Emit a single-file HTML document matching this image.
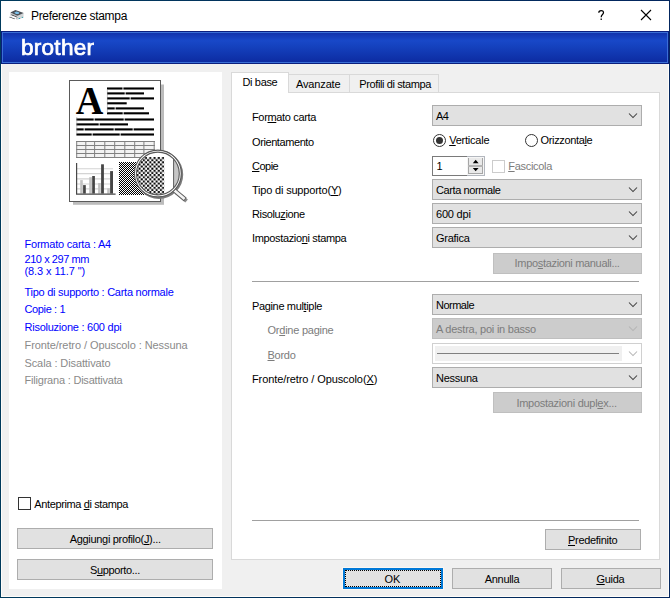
<!DOCTYPE html>
<html lang="it"><head><meta charset="utf-8"><title>Preferenze stampa</title>
<style>
html,body{margin:0;padding:0}
body{width:670px;height:598px;background:#f0f0f0;position:relative;overflow:hidden;font-family:"Liberation Sans",Arial,sans-serif;font-size:11px}
div,svg{position:absolute;box-sizing:border-box}
.t{white-space:nowrap;height:auto}
.t u{text-decoration:underline;text-underline-offset:1px;text-decoration-thickness:1px}
.win{left:0;top:0;width:670px;height:598px;border:1px solid #02305c;border-image:linear-gradient(to right,#003a5c,#03265e) 1}
.win2{left:1px;top:1px;width:668px;height:596px;border:1px solid #fffdfa}
.title{left:1px;top:1px;width:668px;height:30px;background:#fff}
.banner{left:1px;top:31px;width:668px;height:33px;border:1px solid #0a1f7e;background:linear-gradient(#1030a8 0,#1848c8 28%,#1440bc 50%,#0c2aa0 100%)}
.banner i{position:absolute;left:0;top:0;right:0;bottom:0;border:1px solid #3a6fd6}
.logo{left:20.8px;top:35.3px;font-weight:normal;font-size:22px;line-height:26px;color:#fff;letter-spacing:0.25px;white-space:nowrap;-webkit-text-stroke:0.7px #fff;transform:scaleX(1.025);transform-origin:0 0}
.left{left:9px;top:72px;width:213px;height:517px;background:#fff}
.panel{left:231px;top:92px;width:429px;height:468px;background:#fff;border:1px solid #d9d9d9}
.tab{top:74px;height:19px;background:#f0f0f0;border:1px solid #d9d9d9;border-bottom:none}
.tabsel{left:231px;top:72px;width:58px;height:21px;background:#fff;border:1px solid #d9d9d9;border-bottom:none}
.dd{left:432px;width:210px;height:21px;background:#e1e1e1;border:1px solid #adadad}
.dd.dis{background:#cccccc;border-color:#bfbfbf}
.btn{height:21px;background:#e1e1e1;border:1px solid #adadad}
.btn.dis{background:#cccccc;border-color:#bfbfbf}
.sep{left:252px;width:387px;height:1px;background:#a0a0a0}
.radio{width:13px;height:13px;border-radius:50%;border:1px solid #333;background:#fff}
.chk{width:13px;height:13px;border:1px solid #333;background:#fff}
</style></head><body>
<div class="win"></div><div class="win2"></div>
<div class="title"></div>
<!-- title icons -->
<svg style="left:6px;top:6px" width="22" height="18" viewBox="6 6 22 18">
 <polygon points="10.4,12.9 10.6,16.6 17.4,19.8 17.5,15.6" fill="#b9bdc0"/>
 <polygon points="17.5,15.6 23.6,13.1 23.5,17.4 17.4,19.8" fill="#d2d5d7"/>
 <polygon points="10.3,12.6 15.4,10 23.7,13 17.5,15.8" fill="#4a5056"/>
 <polygon points="14.2,12.4 16.6,11.5 19.4,12.6 18.6,14 16,13.9" fill="#7cc0ea"/>
 <polygon points="11.6,14.6 17.3,16.9 17.3,17.7 11.2,15.3" fill="#2e3338"/>
 <polygon points="11.2,15.3 9.2,17.3 14.8,19.3 16.9,17.6" fill="#f4f5f6"/>
 <polygon points="9.2,17.3 14.8,19.3 14.9,18.6 9.8,16.8" fill="#4a4f54"/>
 <polygon points="12.4,16.4 16.2,17.8 15.6,18.4 11.8,17" fill="#ffffff"/>
 <rect x="18.7" y="18" width="1.4" height="0.9" fill="#1f9aa8"/><rect x="21.8" y="16.9" width="1.3" height="0.9" fill="#1f9aa8"/>
</svg>
<svg style="left:596px;top:8px" width="12" height="14" viewBox="0 0 12 14"><path d="M2.8 4.7 C2.8 1.9 7.5 1.9 7.5 4.6 C7.5 6.5 5.2 6.7 5.2 9.2 M5.2 10.5 v1.5" stroke="#000" stroke-width="1.25" fill="none"/></svg>
<svg style="left:640px;top:9px" width="12" height="12" viewBox="0 0 12 12"><path d="M1 1 L11 11 M11 1 L1 11" stroke="#000" stroke-width="1.1" fill="none"/></svg>
<div class="banner"><i></i></div>
<div class="logo">brother</div>
<div class="left"></div>
<svg style="left:60px;top:70px" width="140" height="145" viewBox="60 70 140 145">
<defs>
<filter id="bl" x="-20%" y="-20%" width="140%" height="140%"><feGaussianBlur stdDeviation="1.1"/></filter>
<filter id="bl2" x="-20%" y="-20%" width="140%" height="140%"><feGaussianBlur stdDeviation="1.3"/></filter>
<pattern id="ck1" x="119" y="162" width="2" height="2" patternUnits="userSpaceOnUse"><rect width="2" height="2" fill="#fff"/><rect width="1" height="1" fill="#000"/><rect x="1" y="1" width="1" height="1" fill="#000"/></pattern>
<pattern id="ck2" x="134.3" y="157" width="4.26" height="4.26" patternUnits="userSpaceOnUse"><rect width="4.26" height="4.26" fill="#fff"/><rect x="2.18" y="0.05" width="2.0" height="2.0" fill="#000"/><rect x="0.05" y="2.18" width="2.0" height="2.0" fill="#000"/></pattern>
<clipPath id="lens"><circle cx="157.9" cy="173.5" r="21.4"/></clipPath>
</defs>
<filter id="bl0" x="-20%" y="-20%" width="140%" height="140%"><feGaussianBlur stdDeviation="0.7"/></filter>
<rect x="73" y="84.5" width="91" height="120.3" fill="#bcbcbc" filter="url(#bl0)"/>
<rect x="69.5" y="80.5" width="91" height="121" fill="#fff" stroke="#5a5a5a" stroke-width="1"/>
<text x="75.8" y="113.9" font-family="Liberation Serif, serif" font-weight="bold" font-size="40" textLength="27.6" lengthAdjust="spacingAndGlyphs" fill="#000">A</text>
<rect x="107.0" y="87.45" width="15.5" height="2.1" fill="#000"/>
<rect x="123.4" y="87.45" width="30.6" height="2.1" fill="#000"/>
<rect x="107.0" y="92.35" width="17.7" height="2.1" fill="#000"/>
<rect x="125.6" y="92.35" width="18.4" height="2.1" fill="#000"/>
<rect x="107.0" y="97.35" width="22.7" height="2.1" fill="#000"/>
<rect x="130.6" y="97.35" width="23.4" height="2.1" fill="#000"/>
<rect x="107.0" y="102.25" width="19.7" height="2.1" fill="#000"/>
<rect x="107.0" y="107.35" width="7.7" height="2.1" fill="#000"/>
<rect x="115.6" y="107.35" width="28.4" height="2.1" fill="#000"/>
<rect x="107.0" y="112.25" width="15.7" height="2.1" fill="#000"/>
<rect x="123.6" y="112.25" width="25.4" height="2.1" fill="#000"/>
<rect x="76.4" y="118.45" width="17.3" height="2.1" fill="#000"/>
<rect x="94.6" y="118.45" width="29.1" height="2.1" fill="#000"/>
<rect x="124.6" y="118.45" width="29.4" height="2.1" fill="#000"/>
<rect x="76.4" y="123.35" width="22.3" height="2.1" fill="#000"/>
<rect x="99.6" y="123.35" width="28.4" height="2.1" fill="#000"/>
<rect x="76.4" y="128.35" width="7.3" height="2.1" fill="#000"/>
<rect x="84.6" y="128.35" width="29.1" height="2.1" fill="#000"/>
<rect x="114.6" y="128.35" width="18.1" height="2.1" fill="#000"/>
<rect x="133.6" y="128.35" width="20.4" height="2.1" fill="#000"/>
<rect x="76.4" y="133.45" width="15.3" height="2.1" fill="#000"/>
<rect x="92.6" y="133.45" width="27.1" height="2.1" fill="#000"/>
<rect x="120.6" y="133.45" width="33.4" height="2.1" fill="#000"/>
<path d="M107.4 89v24M76.8 117v17" stroke="#8a8a8a" stroke-width="0.5"/>
<rect x="76.5" y="141.5" width="78" height="16" fill="#f2f2f2"/>
<path d="M76 141.5H155M76 145.5H155M76 149.5H155M76 153.5H155M76 157.5H155M76.70 141V158M85.80 141V158M94.60 141V158M104.80 141V158M114.70 141V158M124.80 141V158M134.70 141V158M143.90 141V158M154.20 141V158" stroke="#808080" stroke-width="1" fill="none"/>
<path d="M77 168.7H113M77 173.6H113M77 178.9H113M77 184H113M77 188.9H113" stroke="#d4d4d4" stroke-width="1.1" fill="none"/>
<rect x="80.2" y="180.1" width="2.6" height="13.5" fill="#c2c2c2"/>
<rect x="83.1" y="185.1" width="2.7" height="8.5" fill="#454545"/>
<rect x="89.2" y="177.2" width="2.7" height="16.4" fill="#c2c2c2"/>
<rect x="92.2" y="176" width="2.7" height="17.6" fill="#454545"/>
<rect x="98.1" y="183" width="2.6" height="10.6" fill="#c2c2c2"/>
<rect x="101.1" y="164.3" width="2.8" height="29.3" fill="#454545"/>
<rect x="107.2" y="188.3" width="2.6" height="5.3" fill="#c2c2c2"/>
<rect x="110.1" y="171.1" width="2.9" height="22.5" fill="#454545"/>
<path d="M76.6 163V194.2H115.6" stroke="#484848" stroke-width="1.2" fill="none"/>
<rect x="119" y="162" width="35" height="33" fill="url(#ck1)"/>
<circle cx="158.9" cy="174.6" r="23.2" fill="none" stroke="#7c7c7c" stroke-width="2.2" filter="url(#bl0)"/>
<path d="M176 192.2L186.6 201" stroke="#8a8a8a" stroke-width="4" filter="url(#bl0)"/>
<path d="M174.2 190.2L185.2 199.5" stroke="#5c5c5c" stroke-width="4.4" stroke-linecap="butt"/>
<path d="M174.2 190.2L184.6 199" stroke="#f4f4f4" stroke-width="2.6" stroke-linecap="butt"/>
<circle cx="157.9" cy="173.5" r="23.4" fill="#fff" stroke="#585858" stroke-width="1.1"/>
<g clip-path="url(#lens)">
<rect x="134" y="150" width="48" height="48" fill="#fff"/>
<rect x="134.3" y="157" width="29.85" height="41" fill="url(#ck2)"/>
<rect x="174" y="150" width="8" height="48" fill="#c6c6c6"/>
<rect x="173" y="150" width="1.1" height="48" fill="#6a6a6a"/>
</g>
<circle cx="157.9" cy="173.5" r="21.4" fill="none" stroke="#585858" stroke-width="1.1"/>
</svg>
<!-- tabs -->
<div class="tab" style="left:288px;width:62px"></div>
<div class="tab" style="left:349px;width:90px"></div>
<div class="panel"></div>
<div class="tabsel"></div>
<!-- dropdowns -->
<div class="dd" style="top:105px"></div>
<div class="dd" style="top:179px"></div>
<div class="dd" style="top:203px"></div>
<div class="dd" style="top:227px"></div>
<div class="dd" style="top:294px"></div>
<div class="dd dis" style="top:318px"></div>
<div class="dd" style="top:343px;background:#fff;border-color:#d0d0d0"></div>
<div style="left:435px;top:346px;width:187px;height:15px;background:#f0f0f0"></div>
<div style="left:437px;top:353px;width:182px;height:1px;background:#808080"></div>
<div class="dd" style="top:367px"></div>
<svg style="left:0;top:0" width="670" height="598" viewBox="0 0 670 598" fill="none" stroke-width="1.05">
 <g stroke="#3c3c3c">
 <path d="M629 113.5l4 4 4-4"/><path d="M629 187.5l4 4 4-4"/><path d="M629 211.5l4 4 4-4"/><path d="M629 235.5l4 4 4-4"/><path d="M629 302.5l4 4 4-4"/><path d="M629 375.5l4 4 4-4"/>
 </g>
 <g stroke="#b4b4b4"><path d="M629 326.5l4 4 4-4"/><path d="M629 351.5l4 4 4-4"/></g>
</svg>
<!-- radios -->
<div class="radio" style="left:433px;top:134px"></div>
<div style="left:436px;top:137px;width:7px;height:7px;border-radius:50%;background:#333"></div>
<div class="radio" style="left:525px;top:134px"></div>
<!-- spinner -->
<div style="left:432px;top:156px;width:53px;height:20px;background:#fff;border:1px solid #7a7a7a"></div>
<div style="left:467px;top:156px;width:18px;height:20px;background:#f6f6f6;border:1px solid #b3b7be;border-left:none"></div>
<div style="left:468px;top:158px;width:15px;height:16px;background:#e9e9e9;border:1px solid #a6a6a6;border-top:none"></div>
<div style="left:468px;top:165px;width:15px;height:2px;background:#b4b4b4"></div>
<svg style="left:468px;top:157px" width="16" height="18" viewBox="0 0 16 18"><path d="M7.7 2.8 L10.6 6.2 H4.8Z M7.7 14.2 L10.6 10.9 H4.8Z" fill="#000"/></svg>
<div class="chk" style="left:492px;top:160px;border-color:#cccccc"></div>
<!-- buttons -->
<div class="btn dis" style="left:493px;top:253px;width:148.5px"></div>
<div class="btn dis" style="left:493px;top:392px;width:148.5px"></div>
<div class="sep" style="top:281px"></div>
<div class="sep" style="top:520px"></div>
<div class="btn" style="left:545px;top:529px;width:96px"></div>
<div style="left:342px;top:567px;width:102px;height:23px;border:1px solid #fbf7f2"></div><div class="btn" style="left:343px;top:568px;width:100px;border:2px solid #0078d7"></div>
<div style="left:345px;top:570px;width:96px;height:17px;border:1px dotted #000"></div>
<div class="btn" style="left:452px;top:568px;width:100px"></div>
<div class="btn" style="left:561px;top:568px;width:100px"></div>
<div class="chk" style="left:18px;top:497px"></div>
<div class="btn" style="left:17px;top:528px;width:196px"></div>
<div class="btn" style="left:17px;top:559px;width:196px"></div>
<div class="t" id="t0" style="left:31.0px;top:8.84px;font-size:12px;line-height:14px;color:#000;letter-spacing:-0.317px">Preferenze stampa</div>
<div class="t" id="t1" style="left:242.4px;top:75.69px;font-size:11px;line-height:13px;color:#000;letter-spacing:-0.328px">Di base</div>
<div class="t" id="t2" style="left:296.0px;top:77.69px;font-size:11px;line-height:13px;color:#000;letter-spacing:-0.146px">Avanzate</div>
<div class="t" id="t3" style="left:359.3px;top:77.69px;font-size:11px;line-height:13px;color:#000;letter-spacing:-0.386px">Profili di stampa</div>
<div class="t" id="t4" style="left:252.0px;top:110.69px;font-size:11px;line-height:13px;color:#000;letter-spacing:-0.345px">For<u>m</u>ato carta</div>
<div class="t" id="t5" style="left:252.0px;top:135.69px;font-size:11px;line-height:13px;color:#000;letter-spacing:-0.413px">Orientamento</div>
<div class="t" id="t6" style="left:252.0px;top:159.69px;font-size:11px;line-height:13px;color:#000;letter-spacing:-0.510px"><u>C</u>opie</div>
<div class="t" id="t7" style="left:252.0px;top:183.69px;font-size:11px;line-height:13px;color:#000;letter-spacing:-0.192px">Tipo di supporto(<u>Y</u>)</div>
<div class="t" id="t8" style="left:252.0px;top:207.69px;font-size:11px;line-height:13px;color:#000;letter-spacing:-0.370px">Risolu<u>z</u>ione</div>
<div class="t" id="t9" style="left:252.0px;top:231.69px;font-size:11px;line-height:13px;color:#000;letter-spacing:-0.348px">Impostazio<u>n</u>i stampa</div>
<div class="t" id="t10" style="left:252.0px;top:299.69px;font-size:11px;line-height:13px;color:#000;letter-spacing:-0.349px">Pagine mul<u>t</u>iple</div>
<div class="t" id="t11" style="left:267.5px;top:323.69px;font-size:11px;line-height:13px;color:#7c7c7c;letter-spacing:-0.242px">Or<u>d</u>ine pagine</div>
<div class="t" id="t12" style="left:267.5px;top:348.69px;font-size:11px;line-height:13px;color:#7c7c7c;letter-spacing:-0.275px"><u>B</u>ordo</div>
<div class="t" id="t13" style="left:252.0px;top:372.69px;font-size:11px;line-height:13px;color:#000;letter-spacing:-0.096px">Fronte/retro / Opuscolo(<u>X</u>)</div>
<div class="t" id="t14" style="left:436.0px;top:109.69px;font-size:11px;line-height:13px;color:#000;letter-spacing:-0.600px">A4</div>
<div class="t" id="t15" style="left:436.0px;top:183.69px;font-size:11px;line-height:13px;color:#000;letter-spacing:-0.400px">Carta normale</div>
<div class="t" id="t16" style="left:436.0px;top:207.69px;font-size:11px;line-height:13px;color:#000;letter-spacing:-0.199px">600 dpi</div>
<div class="t" id="t17" style="left:436.0px;top:231.69px;font-size:11px;line-height:13px;color:#000;letter-spacing:-0.267px">Grafica</div>
<div class="t" id="t18" style="left:436.0px;top:298.69px;font-size:11px;line-height:13px;color:#000;letter-spacing:-0.511px">Normale</div>
<div class="t" id="t19" style="left:436.0px;top:322.69px;font-size:11px;line-height:13px;color:#7c7c7c;letter-spacing:-0.236px">A destra, poi in basso</div>
<div class="t" id="t20" style="left:436.0px;top:371.69px;font-size:11px;line-height:13px;color:#000;letter-spacing:-0.246px">Nessuna</div>
<div class="t" id="t21" style="left:449.2px;top:134.29px;font-size:11px;line-height:13px;color:#000;letter-spacing:-0.223px"><u>V</u>erticale</div>
<div class="t" id="t22" style="left:540.6px;top:134.29px;font-size:11px;line-height:13px;color:#000;letter-spacing:-0.351px">Orizzonta<u>l</u>e</div>
<div class="t" id="t23" style="left:436.5px;top:159.69px;font-size:11px;line-height:13px;color:#000;letter-spacing:-0.600px">1</div>
<div class="t" id="t24" style="left:508.2px;top:159.69px;font-size:11px;line-height:13px;color:#7c7c7c;letter-spacing:-0.287px"><u>F</u>ascicola</div>
<div class="t" id="t25" style="left:514.6px;top:256.69px;font-size:11px;line-height:13px;color:#7c7c7c;letter-spacing:-0.327px">Impo<u>s</u>tazioni manuali...</div>
<div class="t" id="t26" style="left:516.4px;top:396.69px;font-size:11px;line-height:13px;color:#7c7c7c;letter-spacing:-0.273px">Impostazioni dupl<u>e</u>x...</div>
<div class="t" id="t27" style="left:568.0px;top:533.69px;font-size:11px;line-height:13px;color:#000;letter-spacing:-0.301px"><u>P</u>redefinito</div>
<div class="t" id="t28" style="left:384.5px;top:572.69px;font-size:11px;line-height:13px;color:#000;letter-spacing:-0.103px">OK</div>
<div class="t" id="t29" style="left:484.8px;top:572.69px;font-size:11px;line-height:13px;color:#000;letter-spacing:-0.315px">Annulla</div>
<div class="t" id="t30" style="left:596.4px;top:572.69px;font-size:11px;line-height:13px;color:#000;letter-spacing:-0.272px"><u>G</u>uida</div>
<div class="t" id="t31" style="left:34.3px;top:497.69px;font-size:11px;line-height:13px;color:#000;letter-spacing:-0.379px">Anteprima <u>d</u>i stampa</div>
<div class="t" id="t32" style="left:69.7px;top:532.69px;font-size:11px;line-height:13px;color:#000;letter-spacing:-0.311px">Aggiungi profilo(<u>J</u>)...</div>
<div class="t" id="t33" style="left:89.9px;top:563.69px;font-size:11px;line-height:13px;color:#000;letter-spacing:-0.348px">S<u>u</u>pporto...</div>
<div class="t" id="t34" style="left:24.5px;top:237.69px;font-size:11px;line-height:13px;color:#0000ff;letter-spacing:-0.221px">Formato carta : A4</div>
<div class="t" id="t35" style="left:24.5px;top:252.69px;font-size:11px;line-height:13px;color:#0000ff;letter-spacing:-0.434px">210 x 297 mm</div>
<div class="t" id="t36" style="left:24.5px;top:264.69px;font-size:11px;line-height:13px;color:#0000ff;letter-spacing:-0.085px">(8.3 x 11.7 ")</div>
<div class="t" id="t37" style="left:24.5px;top:285.69px;font-size:11px;line-height:13px;color:#0000ff;letter-spacing:-0.261px">Tipo di supporto : Carta normale</div>
<div class="t" id="t38" style="left:24.5px;top:302.69px;font-size:11px;line-height:13px;color:#0000ff;letter-spacing:-0.370px">Copie : 1</div>
<div class="t" id="t39" style="left:24.5px;top:320.69px;font-size:11px;line-height:13px;color:#0000ff;letter-spacing:-0.244px">Risoluzione : 600 dpi</div>
<div class="t" id="t40" style="left:24.5px;top:338.69px;font-size:11px;line-height:13px;color:#8a8a8a;letter-spacing:-0.081px">Fronte/retro / Opuscolo : Nessuna</div>
<div class="t" id="t41" style="left:24.5px;top:356.69px;font-size:11px;line-height:13px;color:#8a8a8a;letter-spacing:-0.108px">Scala : Disattivato</div>
<div class="t" id="t42" style="left:24.5px;top:373.69px;font-size:11px;line-height:13px;color:#8a8a8a;letter-spacing:-0.205px">Filigrana : Disattivata</div>
</body></html>
